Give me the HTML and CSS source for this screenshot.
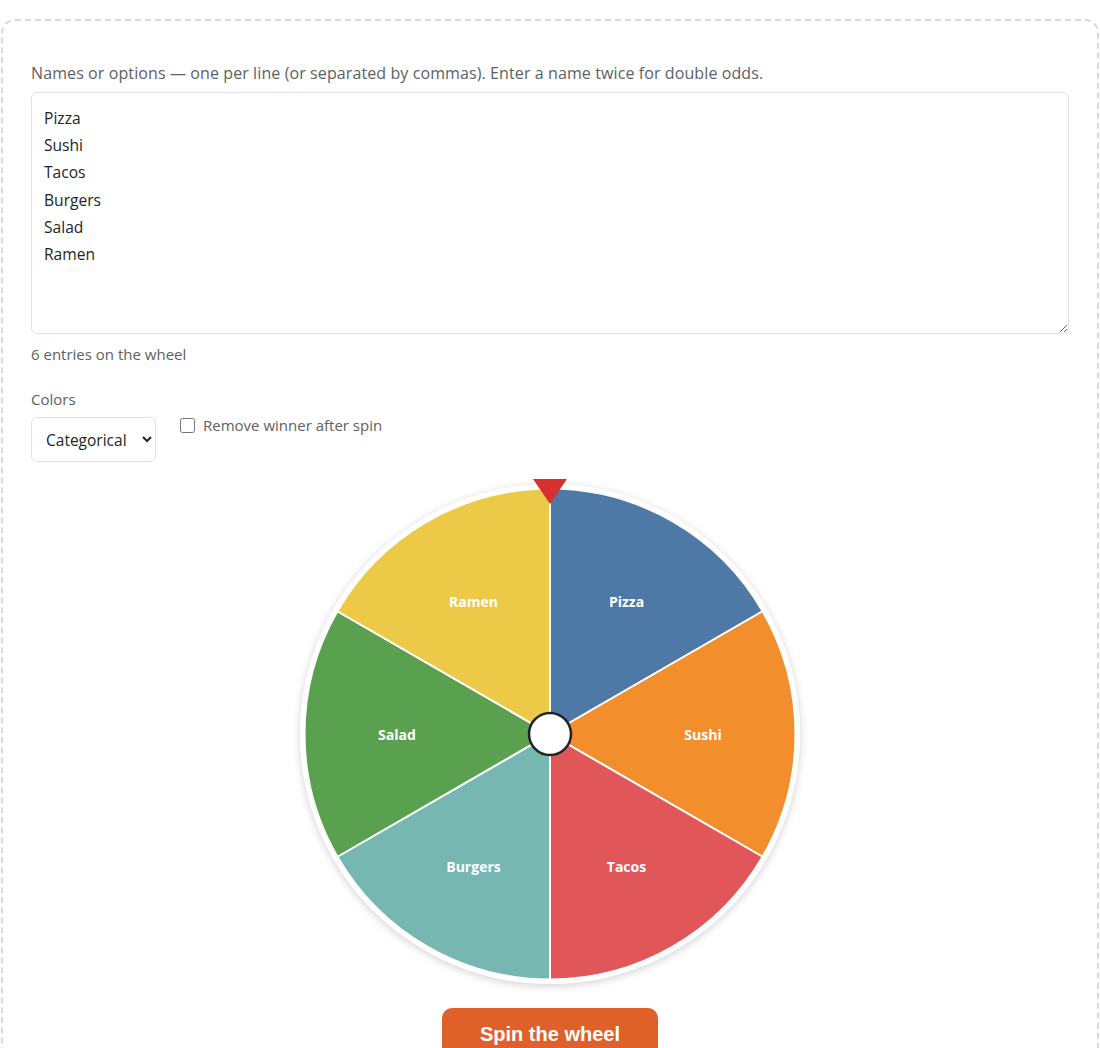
FILE: index.html
```html
<!DOCTYPE html>
<html lang="en">
<head>
<meta charset="utf-8">
<title>Wheel</title>
<link rel="stylesheet" href="styles.css">
</head>
<body>
<div class="page">
  <div class="panel">
    <label class="field-label" for="entries">Names or options — one per line (or separated by commas). Enter a name twice for double odds.</label>
    <textarea id="entries" class="entries">Pizza
Sushi
Tacos
Burgers
Salad
Ramen</textarea>
    <div class="count">6 entries on the wheel</div>
    <div class="controls">
      <div class="group">
        <label class="ctl-label" for="palette">Colors</label>
        <select id="palette" class="select">
          <option>Categorical</option>
        </select>
      </div>
      <label class="check"><input type="checkbox" class="box"> Remove winner after spin</label>
    </div>
    <div class="wheel-area">
      <div class="wheel">
        <svg class="wheel-svg" viewBox="0 0 500 500" width="500" height="500">
          <circle cx="250" cy="250" r="250" fill="#ffffff"/>
          <g stroke="#ffffff" stroke-width="2" stroke-linejoin="round">
            <path d="M250 250 L250 4.5 A245.5 245.5 0 0 1 462.6 127.25 Z" fill="#4e79a7"/>
            <path d="M250 250 L462.6 127.25 A245.5 245.5 0 0 1 462.6 372.75 Z" fill="#f28e2b"/>
            <path d="M250 250 L462.6 372.75 A245.5 245.5 0 0 1 250 495.5 Z" fill="#e15759"/>
            <path d="M250 250 L250 495.5 A245.5 245.5 0 0 1 37.4 372.75 Z" fill="#76b7b2"/>
            <path d="M250 250 L37.4 372.75 A245.5 245.5 0 0 1 37.4 127.25 Z" fill="#59a14f"/>
            <path d="M250 250 L37.4 127.25 A245.5 245.5 0 0 1 250 4.5 Z" fill="#edc948"/>
          </g>
          <g class="seg-text" fill="#ffffff" text-anchor="middle" dominant-baseline="central">
            <text x="326.5" y="117.5">Pizza</text>
            <text x="403" y="250">Sushi</text>
            <text x="326.5" y="382.5">Tacos</text>
            <text x="173.5" y="382.5">Burgers</text>
            <text x="97" y="250">Salad</text>
            <text x="173.5" y="117.5">Ramen</text>
          </g>
          <circle cx="250" cy="250" r="21" fill="#ffffff" stroke="#222222" stroke-width="2.5"/>
        </svg>
        <svg class="pointer" viewBox="0 0 34 25" width="34" height="25">
          <polygon points="0,0 34,0 17,25" fill="#d63031"/>
        </svg>
      </div>
    </div>
    <div class="actions">
      <button class="spin" type="button">Spin the wheel</button>
    </div>
  </div>
</div>
</body>
</html>
```
FILE: styles.css
```css
html, body {
  margin: 0;
  padding: 0;
  background: #ffffff;
}
body {
  font-family: "Open Sans", "Noto Sans", "Liberation Sans", sans-serif;
  color: #212529;
}
.page {
  padding: 19px 1px 0 1px;
}
.panel {
  border: 2px dashed #d5dbe0;
  border-bottom: none;
  border-radius: 14px 14px 0 0;
  padding: 41px 28px 0 28px;
  min-height: 1040px;
  box-sizing: border-box;
}
.field-label {
  display: block;
  font-size: 16px;
  letter-spacing: 0.1px;
  line-height: 22px;
  color: #5c6166;
  margin-bottom: 8px;
}
.entries {
  display: block;
  box-sizing: border-box;
  width: 100%;
  height: 242px;
  padding: 12px 12px;
  border: 1px solid #dee2e6;
  border-radius: 6px;
  font-family: inherit;
  font-size: 15.6px;
  line-height: 27.2px;
  color: #212529;
  margin: 0;
  resize: vertical;
}
.count {
  margin-top: 10px;
  font-size: 15px;
  line-height: 21px;
  color: #5c6166;
}
.controls {
  display: flex;
  align-items: center;
  gap: 24px;
  margin-top: 23px;
}
.group {
  display: flex;
  flex-direction: column;
  align-items: flex-start;
}
.ctl-label {
  font-size: 15px;
  line-height: 22px;
  color: #5c6166;
  margin-bottom: 7px;
}
.select {
  width: 125px;
  height: 45px;
  padding: 0 8px 0 10px;
  border: 1px solid #dee2e6;
  border-radius: 6px;
  background: #ffffff;
  font-family: inherit;
  font-size: 15.5px;
  color: #212529;
}
.check {
  display: flex;
  align-items: center;
  gap: 8px;
  font-size: 15px;
  color: #5c6166;
}
.box {
  width: 15px;
  height: 15px;
  margin: 0;
}
.wheel-area {
  display: flex;
  justify-content: center;
  margin-top: 22px;
}
.wheel {
  position: relative;
  width: 500px;
  height: 500px;
  border-radius: 50%;
  box-shadow: 0 2px 8px rgba(0, 0, 0, 0.18);
}
.wheel-svg {
  display: block;
}
.seg-text {
  font-family: "Open Sans", "Noto Sans", sans-serif;
  font-weight: 700;
  font-size: 14px;
}
.pointer {
  position: absolute;
  top: -5px;
  left: 233px;
}
.actions {
  display: flex;
  justify-content: center;
  margin-top: 24px;
}
.spin {
  width: 216px;
  height: 52px;
  border: none;
  border-radius: 10px;
  background: #e0602a;
  color: #ffffff;
  font-family: "Liberation Sans", Arial, sans-serif;
  font-weight: 700;
  font-size: 20px;
  padding: 0;
  line-height: 50px;
}
```
